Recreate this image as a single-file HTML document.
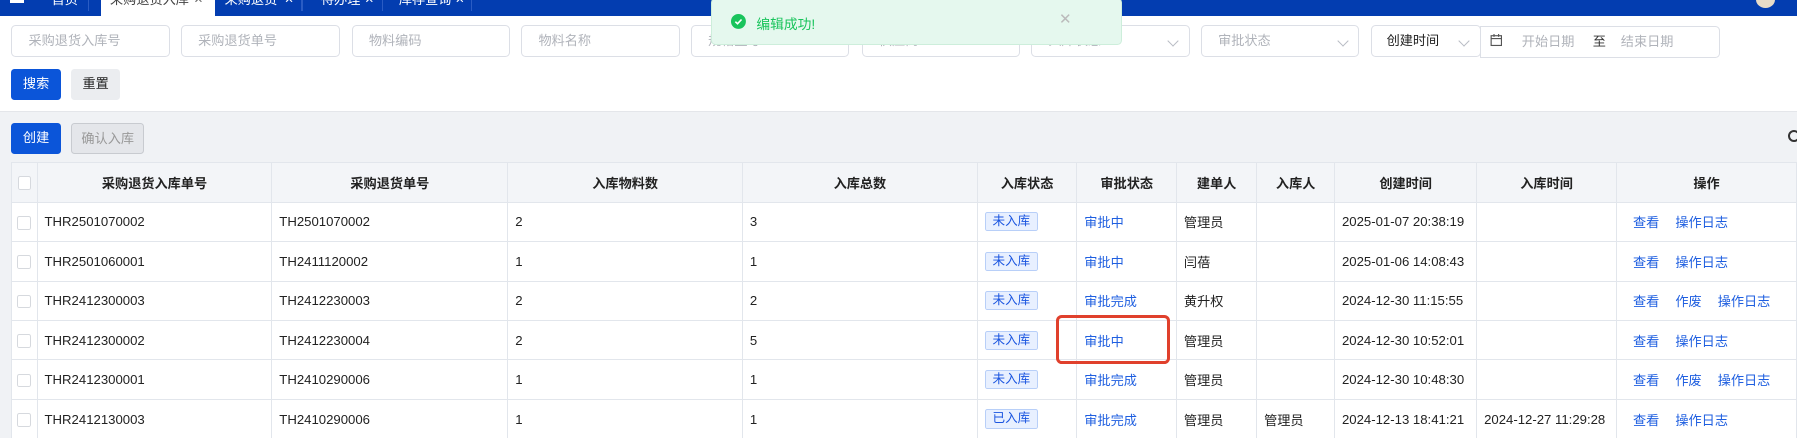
<!DOCTYPE html>
<html><head><meta charset="utf-8"><style>
*{box-sizing:border-box;margin:0;padding:0}
html,body{width:1797px;height:438px;overflow:hidden;background:#fff}
#w{zoom:1.14605;width:1568px;height:383px;position:relative;font-family:"Liberation Sans","Noto Sans CJK SC",sans-serif;font-size:11.5px;color:#222;overflow:hidden}
.abs{position:absolute}
.top{left:0;top:0;width:1568px;height:14px;background:#033db0}
.tab{top:-8px;height:22px;line-height:16px;color:#fff;font-size:11.5px;white-space:nowrap}
.x{top:-8px;line-height:16px;color:#fff;font-size:10px}
.inp{height:28px;top:22px;border:1px solid #dcdfe6;border-radius:4px;color:#b0b3ba;line-height:26px;padding-left:14px;background:#fff}
.chev{position:absolute;right:10px;top:9px;width:7px;height:7px;border-right:1px solid #b8bcc4;border-bottom:1px solid #b8bcc4;transform:rotate(45deg)}
.btn{height:27px;line-height:27px;text-align:center;border-radius:3px;font-size:11.5px}
.gray{left:0;top:97px;width:1568px;height:290px;background:#f0f2f5;border-top:1px solid #e4e6ea}
table{position:absolute;left:10px;top:141px;border-collapse:collapse;table-layout:fixed;background:#fff}
td,th{border:1px solid #e2e6ec;height:34.4px;padding:0 6px;white-space:nowrap;overflow:hidden;text-align:left;font-weight:normal}
th{background:#f3f5f8;font-weight:bold;text-align:center;height:35px}
.cb{display:inline-block;width:12px;height:12px;border:1px solid #d6d9de;border-radius:2px;background:#fff;vertical-align:middle}
.tag{display:inline-block;background:#e8f0ff;border:1px solid #b8cff8;color:#1a55e0;padding:0 6px;line-height:15px;border-radius:2px;font-size:11px}
.lk{color:#1f5fe0}
.ops a{color:#1f5fe0;margin-right:14px;text-decoration:none}
</style></head><body><div id="w">
<div class="abs top"></div>
<div class="abs" style="left:9px;top:0;width:12px;height:3px;background:#fff"></div>
<div class="abs tab" style="left:45px">首页</div>
<div class="abs" style="left:77px;top:0;width:1px;height:10px;background:#2a5cc4"></div>
<div class="abs" style="left:88px;top:0;width:100px;height:14px;background:#fff"></div>
<div class="abs tab" style="left:96px;color:#444">采购退货入库</div><div class="abs x" style="left:169px;color:#666">✕</div>
<div class="abs tab" style="left:196px">采购退货</div><div class="abs x" style="left:248px">✕</div>
<div class="abs" style="left:263px;top:0;width:1px;height:10px;background:#2a5cc4"></div>
<div class="abs tab" style="left:280px">待办理</div><div class="abs x" style="left:318px">✕</div>
<div class="abs" style="left:333px;top:0;width:1px;height:10px;background:#2a5cc4"></div>
<div class="abs tab" style="left:348px">库存查询</div><div class="abs x" style="left:397px">✕</div>
<div class="abs" style="left:411px;top:0;width:1px;height:10px;background:#2a5cc4"></div>
<div class="abs" style="left:1532px;top:-8px;width:17px;height:15px;border-radius:50%;background:#e8dcc8"></div>

<div class="abs inp" style="left:10px;width:138px">采购退货入库号</div>
<div class="abs inp" style="left:158px;width:139px">采购退货单号</div>
<div class="abs inp" style="left:307px;width:138px">物料编码</div>
<div class="abs inp" style="left:455px;width:138px">物料名称</div>
<div class="abs inp" style="left:603px;width:138px">规格型号</div>
<div class="abs inp" style="left:752px;width:138px">供应商</div>
<div class="abs inp" style="left:900px;width:138px">入库状态<span class="chev"></span></div>
<div class="abs inp" style="left:1048px;width:138px">审批状态<span class="chev"></span></div>
<div class="abs inp" style="left:1196px;width:96px;color:#222;padding-left:13px">创建时间<span class="chev"></span></div>
<div class="abs inp" style="left:1291px;width:210px;top:23px;border-radius:0 4px 4px 0;padding-left:36px">开始日期<span style="color:#333;margin:0 13px 0 16px">至</span>结束日期</div>
<svg class="abs" style="left:1300px;top:30px" width="11" height="11" viewBox="0 0 11 11"><rect x="1" y="1.5" width="9" height="8.5" fill="none" stroke="#555" stroke-width="1"/><line x1="1" y1="4" x2="10" y2="4" stroke="#555"/><line x1="3.5" y1="0" x2="3.5" y2="2.5" stroke="#555"/><line x1="7.5" y1="0" x2="7.5" y2="2.5" stroke="#555"/></svg>

<div class="abs btn" style="left:10px;top:60px;width:43px;background:#0b55d9;color:#fff">搜索</div>
<div class="abs btn" style="left:62px;top:60px;width:43px;background:#ebedf0;color:#222">重置</div>

<div class="abs gray"></div>
<div class="abs btn" style="left:10px;top:107px;width:43px;background:#0b55d9;color:#fff">创建</div>
<div class="abs btn" style="left:62px;top:107px;width:64px;background:#e4e6ea;color:#999;border:1px solid #c8cbd0">确认入库</div>
<div class="abs" style="left:1560px;top:113px;width:11px;height:11px;border:2px solid #333;border-radius:50%"></div>

<table>
<colgroup><col style="width:22px"><col style="width:205px"><col style="width:206px"><col style="width:205px"><col style="width:205px"><col style="width:87px"><col style="width:87px"><col style="width:70px"><col style="width:68px"><col style="width:124px"><col style="width:122px"><col style="width:157px"></colgroup>
<tr><th style="padding:0 4px"><span class="cb"></span></th><th>采购退货入库单号</th><th>采购退货单号</th><th>入库物料数</th><th>入库总数</th><th>入库状态</th><th>审批状态</th><th>建单人</th><th>入库人</th><th>创建时间</th><th>入库时间</th><th>操作</th></tr>
<tr><td style="padding:0 4px"><span class="cb"></span></td><td>THR2501070002</td><td>TH2501070002</td><td>2</td><td>3</td><td style="padding-left:6px"><span class="tag">未入库</span></td><td class="lk">审批中</td><td>管理员</td><td></td><td>2025-01-07 20:38:19</td><td></td><td class="ops" style="padding-left:14px"><a>查看</a><a>操作日志</a></td></tr>
<tr><td style="padding:0 4px"><span class="cb"></span></td><td>THR2501060001</td><td>TH2411120002</td><td>1</td><td>1</td><td style="padding-left:6px"><span class="tag">未入库</span></td><td class="lk">审批中</td><td>闫蓓</td><td></td><td>2025-01-06 14:08:43</td><td></td><td class="ops" style="padding-left:14px"><a>查看</a><a>操作日志</a></td></tr>
<tr><td style="padding:0 4px"><span class="cb"></span></td><td>THR2412300003</td><td>TH2412230003</td><td>2</td><td>2</td><td style="padding-left:6px"><span class="tag">未入库</span></td><td class="lk">审批完成</td><td>黄升权</td><td></td><td>2024-12-30 11:15:55</td><td></td><td class="ops" style="padding-left:14px"><a>查看</a><a>作废</a><a>操作日志</a></td></tr>
<tr><td style="padding:0 4px"><span class="cb"></span></td><td>THR2412300002</td><td>TH2412230004</td><td>2</td><td>5</td><td style="padding-left:6px"><span class="tag">未入库</span></td><td class="lk">审批中</td><td>管理员</td><td></td><td>2024-12-30 10:52:01</td><td></td><td class="ops" style="padding-left:14px"><a>查看</a><a>操作日志</a></td></tr>
<tr><td style="padding:0 4px"><span class="cb"></span></td><td>THR2412300001</td><td>TH2410290006</td><td>1</td><td>1</td><td style="padding-left:6px"><span class="tag">未入库</span></td><td class="lk">审批完成</td><td>管理员</td><td></td><td>2024-12-30 10:48:30</td><td></td><td class="ops" style="padding-left:14px"><a>查看</a><a>作废</a><a>操作日志</a></td></tr>
<tr><td style="padding:0 4px"><span class="cb"></span></td><td>THR2412130003</td><td>TH2410290006</td><td>1</td><td>1</td><td style="padding-left:6px"><span class="tag">已入库</span></td><td class="lk">审批完成</td><td>管理员</td><td>管理员</td><td>2024-12-13 18:41:21</td><td>2024-12-27 11:29:28</td><td class="ops" style="padding-left:14px"><a>查看</a><a>操作日志</a></td></tr>
</table>

<div class="abs" style="left:921px;top:275px;width:100px;height:43px;border:3px solid #e0402c;border-radius:5px"></div>

<div class="abs" style="left:620px;top:-2px;width:359px;height:41px;background:#e5f8ee;border:1px solid #cdeedb;border-radius:4px"></div>
<svg class="abs" style="left:638px;top:12px" width="13" height="13" viewBox="0 0 13 13"><circle cx="6.5" cy="6.5" r="6.5" fill="#19c45c"/><path d="M3.8 6.7 L5.7 8.5 L9.2 4.8" fill="none" stroke="#fff" stroke-width="1.4"/></svg>
<div class="abs" style="left:660px;top:11px;color:#19c45c;font-size:12px">编辑成功!</div>
<div class="abs" style="left:924px;top:9px;color:#bbb;font-size:13px">✕</div>
</div></body></html>
